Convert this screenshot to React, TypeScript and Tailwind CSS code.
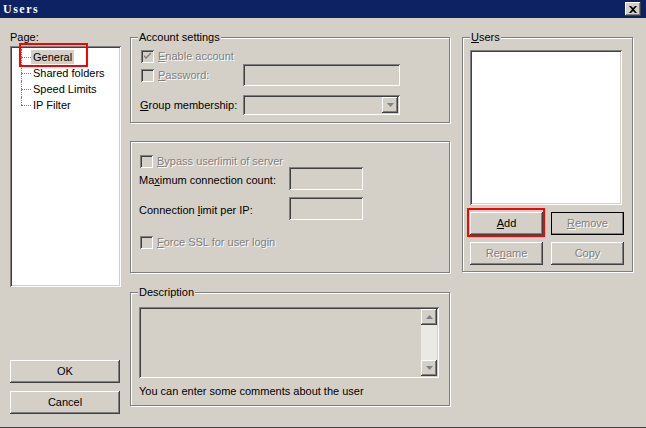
import React from 'react';

const raised =
  'shadow-[inset_-1px_-1px_0_#404040,inset_1px_1px_0_#ffffff,inset_-2px_-2px_0_#808080,inset_2px_2px_0_#d4d0c8]';
const sunken =
  'shadow-[inset_1px_1px_0_#808080,inset_-1px_-1px_0_#ffffff,inset_2px_2px_0_#404040,inset_-2px_-2px_0_#d4d0c8]';
const disabledText = 'text-[#808080] [text-shadow:1px_1px_0_#ffffff]';

function GroupBox({
  title,
  className = '',
  children
}: {
  title?: React.ReactNode;
  className?: string;
  children?: React.ReactNode;
}) {
  return (
    <div
      className={`relative border border-[#808080] shadow-[1px_1px_0_#ffffff,inset_1px_1px_0_#ffffff] ${className}`}
    >
      {title && (
        <span className="absolute -top-[7px] left-[7px] bg-[#d4d0c8] px-[1px] leading-[13px] text-black">
          {title}
        </span>
      )}
      {children}
    </div>
  );
}

function CheckBox({ checked = false }: { checked?: boolean }) {
  return (
    <div className={`w-[13px] h-[13px] shrink-0 bg-[#d4d0c8] ${sunken} flex items-center justify-center`}>
      {checked && (
        <svg width="7" height="7" viewBox="0 0 7 7">
          <path d="M0 2 L0 4 L2 6 L7 1 L7 -1 L2 4 Z" fill="#808080" />
        </svg>
      )}
    </div>
  );
}

function Check({
  label,
  checked,
  className = ''
}: {
  label: React.ReactNode;
  checked?: boolean;
  className?: string;
}) {
  return (
    <div className={`flex items-center h-[13px] ${className}`}>
      <CheckBox checked={checked} />
      <span className={`ml-[4px] leading-[13px] ${disabledText}`}>{label}</span>
    </div>
  );
}

function Button({
  children,
  disabled,
  isDefault,
  className = ''
}: {
  children: React.ReactNode;
  disabled?: boolean;
  isDefault?: boolean;
  className?: string;
}) {
  return (
    <div
      className={`flex items-center justify-center h-[23px] bg-[#d4d0c8] ${raised} ${
        isDefault ? 'outline outline-1 outline-black -outline-offset-1' : ''
      } ${disabled ? disabledText : 'text-black'} ${className}`}
    >
      {children}
    </div>
  );
}

function Arrow({ up }: { up?: boolean }) {
  return (
    <div className={`w-[16px] h-[16px] bg-[#d4d0c8] ${raised} flex items-center justify-center`}>
      <svg width="7" height="4" viewBox="0 0 7 4">
        {up ? (
          <path d="M3.5 0 L7 4 L0 4 Z" fill="#808080" />
        ) : (
          <path d="M0 0 L7 0 L3.5 4 Z" fill="#808080" />
        )}
      </svg>
    </div>
  );
}

const pages = ['General', 'Shared folders', 'Speed Limits', 'IP Filter'];

export default function App() {
  return (
    <div
      className="w-[646px] h-[428px] bg-[#d4d0c8] flex flex-col text-[11px] text-black overflow-hidden border-b border-[#404040]"
      style={{ fontFamily: '"Liberation Sans", Arial, sans-serif' }}
    >
      {/* title bar */}
      <div className="h-[18px] shrink-0 bg-[#0c2262] flex items-center justify-between pl-[3px] pr-[5px]">
        <span
          className="text-white font-bold text-[12px] tracking-[1.5px] leading-none"
          style={{ fontFamily: '"Liberation Serif", serif' }}
        >
          Users
        </span>
        <div className={`w-[16px] h-[14px] bg-[#d4d0c8] ${raised} flex items-center justify-center`}>
          <svg width="8" height="7" viewBox="0 0 8 7">
            <path d="M0 0 L2 0 L4 2 L6 0 L8 0 L5 3.5 L8 7 L6 7 L4 5 L2 7 L0 7 L3 3.5 Z" fill="#000" />
          </svg>
        </div>
      </div>

      <div className="flex flex-1 pl-[10px]">
        {/* left column */}
        <div className="w-[111px] flex flex-col">
          <div className="mt-[13px] leading-[13px]">Page:</div>
          <div className={`relative mt-[2px] h-[241px] bg-white ${sunken} pt-[3px]`}>
            {pages.map((p, i) => (
              <div key={p} className="flex items-stretch h-[16px]">
                <div className="relative ml-[11px] w-[10px]">
                  <div
                    className={`absolute left-0 top-0 border-l border-dotted border-[#808080] ${
                      i === pages.length - 1 ? 'h-[8px]' : 'h-[16px]'
                    }`}
                  />
                  <div className="absolute left-0 top-[8px] w-[10px] border-t border-dotted border-[#808080]" />
                </div>
                <span
                  className={`px-[2px] leading-[14px] self-center ${i === 0 ? 'bg-[#d4d0c8]' : ''}`}
                >
                  {p}
                </span>
              </div>
            ))}
            <div className="absolute left-[9px] -top-[3px] w-[69px] h-[24px] border-2 border-[#ff0000]" />
          </div>
          <Button className="mt-[73px] w-[110px]">OK</Button>
          <Button className="mt-[8px] w-[110px]">Cancel</Button>
        </div>

        {/* middle column */}
        <div className="ml-[9px] w-[320px] flex flex-col">
          <GroupBox title="Account settings" className="mt-[19px] h-[86px] pl-[10px] pt-[12px]">
            <Check
              checked
              label={
                <>
                  <u>E</u>nable account
                </>
              }
            />
            <div className="flex items-center h-[22px] mt-[1px]">
              <div className="w-[102px] pt-[1px]">
                <Check
                  label={
                    <>
                      <u>P</u>assword:
                    </>
                  }
                />
              </div>
              <div className={`w-[157px] h-[22px] ${sunken}`} />
            </div>
            <div className="flex items-center h-[20px] mt-[9px]">
              <div className="w-[102px] leading-[13px] -ml-[1px] pt-[1px]">
                <u>G</u>roup membership:
              </div>
              <div className={`w-[157px] h-[20px] ml-[1px] ${sunken} flex justify-end items-start p-[2px]`}>
                <Arrow />
              </div>
            </div>
          </GroupBox>

          <GroupBox className="mt-[18px] h-[132px] pl-[9px] pt-[13px]">
            <Check
              label={
                <>
                  <u>B</u>ypass userlimit of server
                </>
              }
            />
            <div className="flex items-center h-[23px] -mt-[1px]">
              <div className="w-[149px] leading-[13px] -ml-[1px] pt-[4px]">
                Ma<u>x</u>imum connection count:
              </div>
              <div className={`w-[74px] h-[23px] ml-[1px] ${sunken}`} />
            </div>
            <div className="flex items-center h-[23px] mt-[7px]">
              <div className="w-[149px] leading-[13px] -ml-[1px] pt-[4px]">
                Connection <u>l</u>imit per IP:
              </div>
              <div className={`w-[74px] h-[23px] ml-[1px] ${sunken}`} />
            </div>
            <Check
              className="mt-[16px]"
              label={
                <>
                  <u>F</u>orce SSL for user login
                </>
              }
            />
          </GroupBox>

          <GroupBox title="Description" className="mt-[19px] h-[114px] pl-[8px] pt-[14px]">
            <div className={`w-[300px] h-[71px] ${sunken} flex justify-end p-[2px]`}>
              <div className="w-[16px] flex flex-col bg-[#ebe9e4]">
                <Arrow up />
                <div className="flex-1" />
                <Arrow />
              </div>
            </div>
            <div className="mt-[7px] leading-[13px]">You can enter some comments about the user</div>
          </GroupBox>
        </div>

        {/* right column */}
        <div className="ml-[12px] w-[171px] flex flex-col">
          <GroupBox
            title={
              <>
                <u>U</u>sers
              </>
            }
            className="mt-[19px] h-[235px] pl-[7px] pt-[12px]"
          >
            <div className={`w-[152px] h-[155px] bg-white ${sunken}`} />
            <div className="flex mt-[7px] gap-[8px]">
              <div className="relative">
                <Button className="w-[73px]">
                  <span>
                    <u>A</u>dd
                  </span>
                </Button>
                <div className="absolute -left-[3px] -top-[4px] w-[78px] h-[29px] border-2 border-[#ff0000]" />
              </div>
              <Button disabled isDefault className="w-[73px]">
                <span>
                  <u>R</u>emove
                </span>
              </Button>
            </div>
            <div className="flex mt-[7px] gap-[8px]">
              <Button disabled className="w-[73px]">
                <span>
                  Re<u>n</u>ame
                </span>
              </Button>
              <Button disabled className="w-[73px]">
                Copy
              </Button>
            </div>
          </GroupBox>
        </div>
      </div>
    </div>
  );
}
